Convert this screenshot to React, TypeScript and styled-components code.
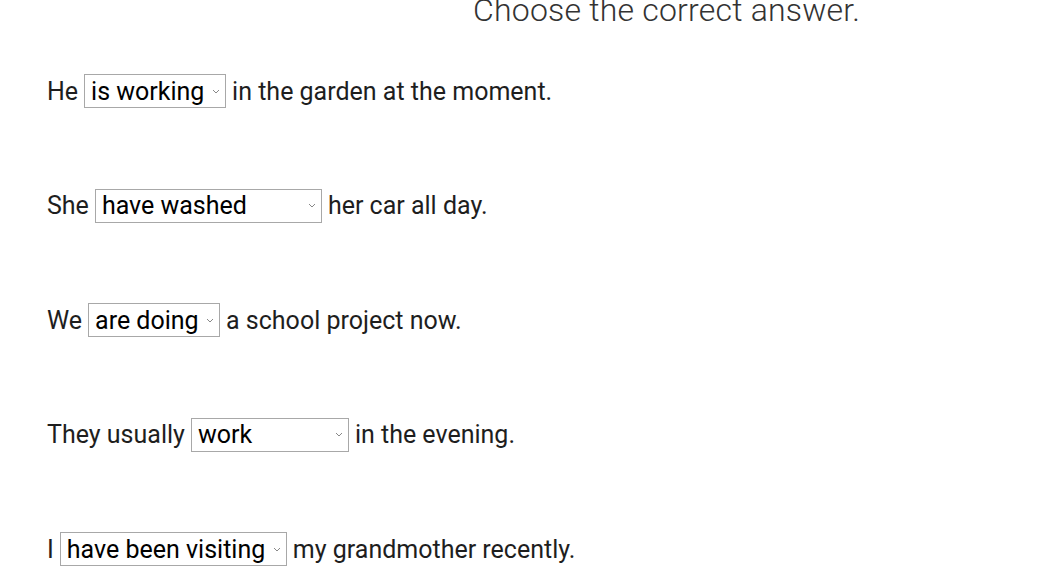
import styled, { createGlobalStyle } from "styled-components";

const GlobalStyle = createGlobalStyle`
    body {
        margin: 0;
        background: #fff;
        font-family: Roboto, "Liberation Sans", sans-serif;
        color: #1e1e1e;
    }
`

const Page = styled.div`
    padding: 0 0 0 47px;
`

const Title = styled.h1`
    margin: -9px 0 0 426px;
    font-size: 32px;
    font-weight: 300;
    line-height: 38px;
    color: #333;
    letter-spacing: 0.2px;
`

const Questions = styled.div`
    display: flex;
    flex-direction: column;
    gap: 80.5px;
    margin-top: 45px;
`

const Row = styled.div`
    display: flex;
    align-items: center;
    gap: 6px;
    height: 34px;
    font-size: 25px;
`

const Select = styled.select<{ $width: number }>`
    appearance: none;
    width: ${p => p.$width}px;
    height: 34px;
    padding: 0 0 0 6px;
    border: 1px solid #a8a8a8;
    border-radius: 0;
    background: #fff url("data:image/svg+xml,%3Csvg xmlns='http://www.w3.org/2000/svg' width='8' height='5' viewBox='0 0 8 5'%3E%3Cpath d='M1 1l3 3 3-3' fill='none' stroke='%23888' stroke-width='1'/%3E%3C/svg%3E") no-repeat right 5px center;
    font-family: Roboto, "Liberation Sans", sans-serif;
    font-size: 25px;
    color: #000;
`

const questions = [
    { before: "He", answer: "is working", width: 142, after: "in the garden at the moment." },
    { before: "She", answer: "have washed", width: 227, after: "her car all day." },
    { before: "We", answer: "are doing", width: 132, after: "a school project now." },
    { before: "They usually", answer: "work", width: 158, after: "in the evening." },
    { before: "I", answer: "have been visiting", width: 227, after: "my grandmother recently." },
]

const App = (): JSX.Element => {
    return (
        <Page>
            <GlobalStyle />
            <Title>Choose the correct answer.</Title>
            <Questions>
                {questions.map(q => (
                    <Row key={q.before}>
                        <span>{q.before}</span>
                        <Select $width={q.width} defaultValue={q.answer}>
                            <option>{q.answer}</option>
                        </Select>
                        <span>{q.after}</span>
                    </Row>
                ))}
            </Questions>
        </Page>
    );
}

export default App;
